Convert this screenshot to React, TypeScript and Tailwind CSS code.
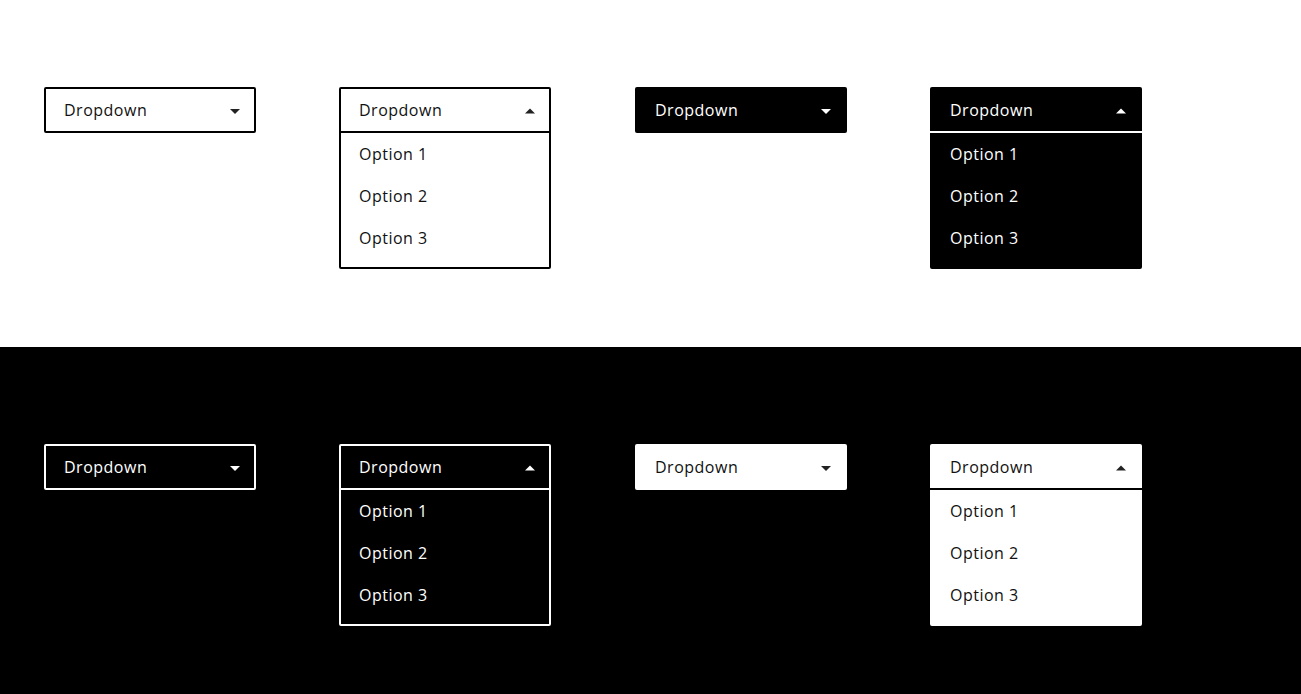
import { useState } from "react";

type Variant = {
  box: string;
  inset: string;
  line: string;
  caret: string;
};

const outlineLight: Variant = {
  box: "border-2 border-black bg-white text-[#111]",
  inset: "pr-3.5 pl-[18px]",
  line: "border-black",
  caret: "text-[#222]",
};
const solidLight: Variant = {
  box: "py-0.5 bg-black text-white",
  inset: "pr-4 pl-5",
  line: "border-white",
  caret: "text-white",
};
const outlineDark: Variant = {
  box: "border-2 border-white bg-black text-white",
  inset: "pr-3.5 pl-[18px]",
  line: "border-white",
  caret: "text-white",
};
const solidDark: Variant = {
  box: "py-0.5 bg-white text-[#111]",
  inset: "pr-4 pl-5",
  line: "border-black",
  caret: "text-[#222]",
};

const options = ["Option 1", "Option 2", "Option 3"];

function Caret({ up, className }: { up: boolean; className: string }) {
  return (
    <svg width="10" height="8" viewBox="0 0 10 8" fill="currentColor" aria-hidden="true" className={className}>
      <path d={up ? "M0 7.4 5 2.4 10 7.4Z" : "M0 3 5 8 10 3Z"} />
    </svg>
  );
}

function Dropdown({ variant, initiallyOpen = false }: { variant: Variant; initiallyOpen?: boolean }) {
  const [open, setOpen] = useState(initiallyOpen);
  return (
    <div className={`w-[212px] rounded-[2px] ${variant.box}`}>
      <button
        type="button"
        aria-expanded={open}
        onClick={() => setOpen(!open)}
        className={`flex h-[42px] w-full items-center justify-between ${variant.inset}`}
      >
        <span>Dropdown</span>
        <Caret up={open} className={variant.caret} />
      </button>
      {open && (
        <ul className={`border-t-2 pb-2 ${variant.line}`}>
          {options.map((option) => (
            <li key={option}>
              <button type="button" className={`flex h-[42px] w-full items-center ${variant.inset}`}>
                {option}
              </button>
            </li>
          ))}
        </ul>
      )}
    </div>
  );
}

function Row({ outline, solid }: { outline: Variant; solid: Variant }) {
  return (
    <div className="flex items-start gap-21">
      <div className="flex items-start gap-[83px]">
        <Dropdown variant={outline} />
        <Dropdown variant={outline} initiallyOpen />
      </div>
      <div className="flex items-start gap-[83px]">
        <Dropdown variant={solid} />
        <Dropdown variant={solid} initiallyOpen />
      </div>
    </div>
  );
}

export default function App() {
  return (
    <main className="flex min-h-screen flex-col font-['Open_Sans',sans-serif] text-base tracking-[0.5px]">
      <section className="bg-white px-11 pt-[87px] pb-[78px]">
        <Row outline={outlineLight} solid={solidLight} />
      </section>
      <section className="grow bg-black px-11 pt-[97px] pb-[68px]">
        <Row outline={outlineDark} solid={solidDark} />
      </section>
    </main>
  );
}
